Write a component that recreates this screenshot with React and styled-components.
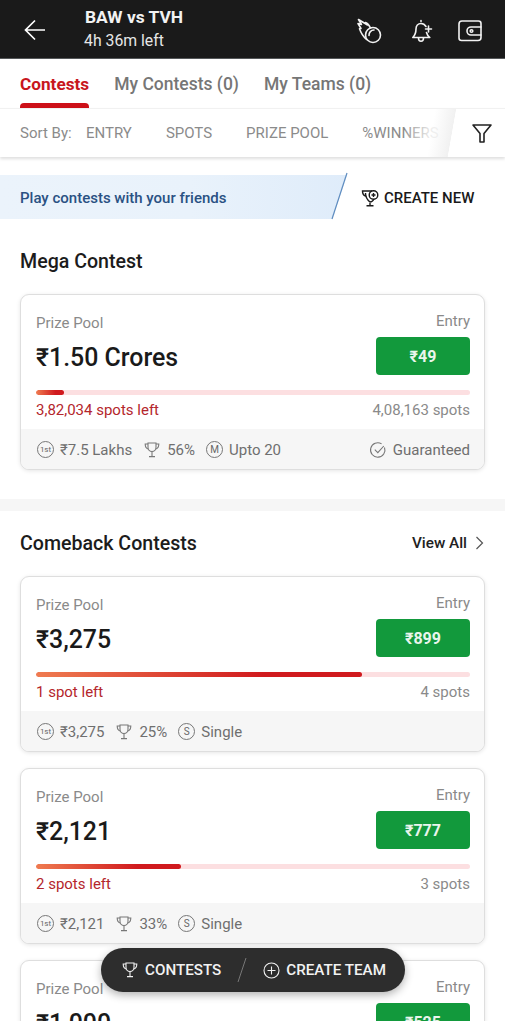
import React from "react";
import styled, { createGlobalStyle } from "styled-components";

const Global = createGlobalStyle`
  html, body { margin: 0; padding: 0; background: #fff; }
  body { font-family: Roboto, "Liberation Sans", sans-serif; }
  * { box-sizing: border-box; }
`;
const Page = styled.div`position: relative; width: 505px; height: 1024px; overflow: hidden; background: #fff;`;
const Scroll = styled.div`height: 1021px; overflow: hidden;`;
const Header = styled.header`
  height: 59px; background: #1a1a1a; border-bottom: 1px solid #55585a; color: #fff;
  display: flex; align-items: center; padding: 0 21px 0 24px;
`;
const Back = styled.svg`width: 22px; height: 24px; margin: 2px 38px 0 0; flex: none;`;
const Match = styled.div`display: flex; flex-direction: column; flex: 1;`;
const MatchTitle = styled.div`font-size: 17.4px; font-weight: 700; line-height: 23px; color: #f2f2f2; padding-left: 1px;`;
const MatchTime = styled.div`font-size: 15.8px; line-height: 23px; color: #e6e6e6;`;
const HeadIcons = styled.div`display: flex; align-items: center; gap: 22px; margin-top: 4px;`;
const HeadIcon = styled.svg`width: 27px; height: 27px; display: block;`;
const FlameIcon = styled(HeadIcon)`margin-right: 4px;`;
const Tabs = styled.nav`height: 49px; display: flex; gap: 25px; padding: 0 20px;`;
const Tab = styled.div`
  position: relative; padding-top: 14px; line-height: 22px;
  color: ${p => (p.$active ? "#c8161d" : "#767676")};
  font-size: ${p => (p.$active ? 17.2 : 17.5)}px;
  font-weight: ${p => (p.$active ? 700 : 500)};
  ${p => p.$active && `&::after { content: ""; position: absolute; left: 0; right: 0; bottom: 0; height: 5px; background: #cd1018; border-radius: 4px 4px 0 0; }`}
`;
const SortBar = styled.div`
  height: 49px; display: flex; align-items: center; padding-left: 20px; position: relative;
  background: #fff; border-top: 1px solid #f1f1f1; box-shadow: 0 2px 3px rgba(0,0,0,.13);
  font-size: 15px; color: #8b8b8b;
`;
const SortLabel = styled.span`width: 66px; flex: none;`;
const SortItems = styled.div`display: flex; gap: 34px;`;
const SortFade = styled.div`
  position: absolute; top: 0; bottom: 0; left: 405px; width: 52px;
  background: linear-gradient(100deg, rgba(255,255,255,0), rgba(255,255,255,.85) 50%, #f1f1f1 84%, #fff 85%);
  pointer-events: none;
`;
const Filter = styled.svg`position: absolute; right: 12px; top: 13px; width: 22px; height: 22px;`;
const Banner = styled.div`
  margin-top: 18px; height: 44px; display: flex; align-items: stretch; position: relative;
  background: linear-gradient(90deg, #ebf3fb, #e9f2fb 55%, #dfecfa) no-repeat;
  background-size: 347px 100%;
`;
const BannerText = styled.div`
  flex: 1; font-size: 15px; font-weight: 500; color: #2a5183; display: flex; align-items: center; padding: 1px 0 0 20px;
`;
const CreateNew = styled.div`
  width: 173px; margin-top: -3px; height: 48px; background: #fff; display: flex; align-items: center; gap: 5px;
  padding: 3px 0 0 29px; font-size: 15px; font-weight: 500; color: #1a1a1a; position: relative;
  clip-path: polygon(16px 0, 100% 0, 100% 100%, 0 100%);
`;
const Slash = styled.svg`position: absolute; left: 330px; top: -3px; width: 18px; height: 48px; z-index: 1;`;
const Section = styled.section`padding: 0 20px; margin-top: ${p => p.$top}px;`;
const SectionHead = styled.div`display: flex; align-items: center; justify-content: space-between; height: 24px; margin-bottom: 21px;`;
const SectionTitle = styled.h2`margin: 0; font-size: 19.6px; font-weight: 500; color: #1c1c1c;`;
const ViewAll = styled.div`display: flex; align-items: center; gap: 8px; font-size: 15.3px; font-weight: 500; color: #222; margin-right: 1px;`;
const Gap = styled.div`height: 12px; background: #f6f6f6; margin-top: 29px;`;
const Card = styled.article`
  height: 176px; border: 1px solid #dedede; border-radius: 9px; background: #fff;
  box-shadow: 0 1px 4px rgba(0,0,0,.1); overflow: hidden; display: flex; flex-direction: column;
  & + & { margin-top: 16px; }
`;
const CardTop = styled.div`flex: 1; padding: 0 14px 0 15px; display: flex; flex-direction: column;`;
const Labels = styled.div`display: flex; justify-content: space-between; font-size: 15px; color: #8a8a8a; padding-top: 19px; line-height: 18px;`;
const EntryLabel = styled.span`margin-top: -2px;`;
const PrizeRow = styled.div`display: flex; justify-content: space-between; align-items: center; margin-top: 5px;`;
const Prize = styled.div`font-size: 24.9px; font-weight: 500; color: #1a1a1a; margin-top: 2px;`;
const Entry = styled.div`
  width: 94px; height: 38px; border-radius: 4px; background: #12993c; color: #e9f5ec;
  display: flex; align-items: center; justify-content: center; font-size: 16px; font-weight: 700;
`;
const Track = styled.div`height: 5px; background: #fcdfe1; border-radius: 3px; margin-top: 15px; overflow: hidden;`;
const Fill = styled.div`height: 100%; border-radius: 3px; background: linear-gradient(90deg, #ef7b50, #d01a1e 70%);`;
const Spots = styled.div`display: flex; justify-content: space-between; font-size: 15px; line-height: 18px; margin-top: 6px; color: #8a8a8a;`;
const Left = styled.span`color: #b4262c;`;
const CardFoot = styled.div`
  height: 40px; background: #f6f6f6; padding: 1px 14px 0 16px; display: flex; align-items: center; font-size: 15px; color: #6f6f6f;
`;
const Meta = styled.span`display: flex; align-items: center; gap: 6px; margin-right: 11px;`;
const Guaranteed = styled(Meta)`margin: 0 0 0 auto;`;
const MetaIcon = styled.svg`width: 18px; height: 18px; flex: none;`;
const Circle = styled.span`
  width: 17px; height: 17px; border: 1px solid #777; border-radius: 50%; flex: none; display: flex; align-items: center; justify-content: center;
  font-size: ${p => (p.$small ? 8 : 10)}px; color: #666;
`;
const Pill = styled.div`
  position: absolute; left: 101px; top: 948px; width: 304px; height: 44px; border-radius: 22px; background: #2d2d2d;
  box-shadow: 0 3px 8px rgba(0,0,0,.3); color: #f2f2f2; display: flex; align-items: center; font-size: 15.2px; font-weight: 500; padding-left: 20px;
`;
const PillItem = styled.span`display: flex; align-items: center; gap: 6px;`;
const PillSlash = styled.svg`width: 12px; height: 26px; margin: 0 15px; flex: none;`;

const Trophy = ({ color = "#777" }) => (
  <MetaIcon viewBox="0 0 18 18" fill="none" stroke={color} strokeWidth="1.1">
    <path d="M5 2h8v4.500a4 4 0 0 1-8 0z" />
    <path d="M5 3H2.200c0 3 1 4.500 3 5M13 3h2.800c0 3-1 4.500-3 5M9 10.500V15M6 15.600h6" />
  </MetaIcon>
);

const Foot = ({ first, kind, winners, mode, guaranteed }) => (
  <CardFoot>
    <Meta><Circle $small>1st</Circle>{first}</Meta>
    <Meta><Trophy />{winners}</Meta>
    <Meta><Circle>{kind}</Circle>{mode}</Meta>
    {guaranteed && (
      <Guaranteed>
        <MetaIcon viewBox="0 0 18 18" fill="none" stroke="#777" strokeWidth="1.1">
          <path d="M15.500 6.500A7.200 7.200 0 1 1 12.600 2.900" />
          <path d="M5.800 8.600l3 3 6-6.600" />
        </MetaIcon>
        Guaranteed
      </Guaranteed>
    )}
  </CardFoot>
);

const Contest = ({ prize, entry, pct, left, spots, foot }) => (
  <Card>
    <CardTop>
      <Labels><span>Prize Pool</span><EntryLabel>Entry</EntryLabel></Labels>
      <PrizeRow><Prize>{prize}</Prize><Entry>{entry}</Entry></PrizeRow>
      <Track><Fill style={{ width: `${pct}%` }} /></Track>
      <Spots><Left>{left}</Left><span>{spots}</span></Spots>
    </CardTop>
    <Foot {...foot} />
  </Card>
);

export default function App() {
  return (
    <Page>
      <Global />
      <Scroll>
        <Header>
          <Back viewBox="0 0 22 24" fill="none" stroke="#fff" strokeWidth="1.7">
            <path d="M21 12H2M11 2.500 1.500 12l9.500 9.500" />
          </Back>
          <Match>
            <MatchTitle>BAW vs TVH</MatchTitle>
            <MatchTime>4h 36m left</MatchTime>
          </Match>
          <HeadIcons>
            <FlameIcon viewBox="0 0 27 27" fill="none" stroke="#f2f2f2" strokeWidth="1.600" strokeLinejoin="round" strokeLinecap="round">
              <circle cx="18" cy="17" r="7.500" />
              <path d="M15.500 10C14 6.800 12.500 5.200 10.500 4.500L12.500 7 3.500 1.500 6.500 6.500 3 5.500 6 10.500 4.500 10.800C6 15 8 18.500 11.500 21.500" />
              <path d="M14 17.500c-.2-3 2-5.500 5-5.500" />
            </FlameIcon>
            <HeadIcon viewBox="0 0 27 27" fill="none" stroke="#f2f2f2" strokeWidth="1.600" strokeLinecap="round" strokeLinejoin="round">
              <path d="M13 2.500v1M18 8.500C16.500 6 15 5.500 13 5.500c-3 0-5 2.500-5 5.500 0 4-.7 6-3.200 8.500h17C20 18 19 16.500 18.500 14.500" />
              <path d="M10.500 20c0 2 1 3.300 2.500 3.300S15.500 22 15.500 20M20.500 8v6M17.500 11h6" />
            </HeadIcon>
            <HeadIcon viewBox="0 0 27 27" fill="none" stroke="#f2f2f2" strokeWidth="1.600" strokeLinejoin="round">
              <path d="M24 6V5.500A2.500 2.500 0 0 0 21.500 3H5a3 3 0 0 0-3 3v14a2.500 2.500 0 0 0 2.500 2.500H21a3 3 0 0 0 3-3V6z" />
              <path d="M24.500 9H14a4 4 0 0 0 0 8h10.500" />
              <circle cx="14.500" cy="13" r="1.300" />
            </HeadIcon>
          </HeadIcons>
        </Header>
        <Tabs>
          <Tab $active>Contests</Tab>
          <Tab>My Contests (0)</Tab>
          <Tab>My Teams (0)</Tab>
        </Tabs>
        <SortBar>
          <SortLabel>Sort By:</SortLabel>
          <SortItems>
            <span>ENTRY</span><span>SPOTS</span><span>PRIZE POOL</span><span>%WINNERS</span>
          </SortItems>
          <SortFade />
          <Filter viewBox="0 0 22 22" fill="none" stroke="#222" strokeWidth="1.600" strokeLinejoin="round">
            <path d="M2 3h18l-7 8.500V20H9v-8.500z" />
          </Filter>
        </SortBar>
        <Banner>
          <BannerText>Play contests with your friends</BannerText>
          <Slash viewBox="0 0 18 48" fill="none" stroke="#5f8dc0" strokeWidth="1.200">
            <path d="M17 1 2 47" />
          </Slash>
          <CreateNew>
            <MetaIcon viewBox="0 0 18 18" fill="none" stroke="#1a1a1a" strokeWidth="1.400">
              <path d="M5 2H1.500c0 3 .8 4.300 3 5M9 14v2.500M5.500 16.800h7M5 2h6M4.500 4c0 4 2 7 4.500 9 1.500 0 3-1 4-3" />
              <circle cx="12.500" cy="6" r="4.300" />
              <path d="M12.500 4v4M10.500 6h4" />
            </MetaIcon>
            CREATE NEW
          </CreateNew>
        </Banner>
        <Section $top={30}>
          <SectionHead><SectionTitle>Mega Contest</SectionTitle></SectionHead>
          <Contest prize="₹1.50 Crores" entry="₹49" pct={6.500} left="3,82,034 spots left" spots="4,08,163 spots"
            foot={{ first: "₹7.5 Lakhs", kind: "M", winners: "56%", mode: "Upto 20", guaranteed: true }} />
        </Section>
        <Gap />
        <Section $top={20}>
          <SectionHead>
            <SectionTitle>Comeback Contests</SectionTitle>
            <ViewAll>View All
              <svg width="9" height="14" viewBox="0 0 9 14" fill="none" stroke="#555" strokeWidth="1.200"><path d="M1.500 1l6 6-6 6" /></svg>
            </ViewAll>
          </SectionHead>
          <Contest prize="₹3,275" entry="₹899" pct={75} left="1 spot left" spots="4 spots"
            foot={{ first: "₹3,275", kind: "S", winners: "25%", mode: "Single" }} />
          <Contest prize="₹2,121" entry="₹777" pct={33.500} left="2 spots left" spots="3 spots"
            foot={{ first: "₹2,121", kind: "S", winners: "33%", mode: "Single" }} />
          <Contest prize="₹1,000" entry="₹525" pct={50} left="1 spot left" spots="2 spots"
            foot={{ first: "₹1,000", kind: "S", winners: "50%", mode: "Single" }} />
        </Section>
      </Scroll>
      <Pill>
        <PillItem><Trophy color="#f2f2f2" />CONTESTS</PillItem>
        <PillSlash viewBox="0 0 12 26" fill="none" stroke="#777" strokeWidth="1"><path d="M10 1 2 25" /></PillSlash>
        <PillItem>
          <svg width="17" height="17" viewBox="0 0 17 17" fill="none" stroke="#f2f2f2" strokeWidth="1.100"><circle cx="8.500" cy="8.500" r="7.500" /><path d="M8.500 4.500v8M4.500 8.500h8" /></svg>
          CREATE TEAM
        </PillItem>
      </Pill>
    </Page>
  );
}
